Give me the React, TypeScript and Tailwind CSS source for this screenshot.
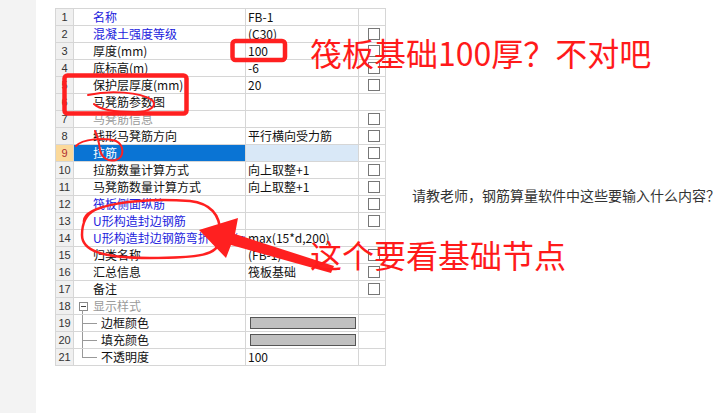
import React from "react";

type Row = {
  name: string;
  value?: string;
  tone?: "blue" | "gray";
  check?: boolean;
  selected?: boolean;
  group?: boolean;
  tree?: boolean;
  bar?: boolean;
};

const rows: Row[] = [
  { name: "名称", value: "FB-1", tone: "blue" },
  { name: "混凝土强度等级", value: "(C30)", tone: "blue", check: true },
  { name: "厚度(mm)", value: "100", check: true },
  { name: "底标高(m)", value: "-6", check: true },
  { name: "保护层厚度(mm)", value: "20", check: true },
  { name: "马凳筋参数图" },
  { name: "马凳筋信息", tone: "gray", check: true },
  { name: "线形马凳筋方向", value: "平行横向受力筋", check: true },
  { name: "拉筋", selected: true, check: true },
  { name: "拉筋数量计算方式", value: "向上取整+1", check: true },
  { name: "马凳筋数量计算方式", value: "向上取整+1", check: true },
  { name: "筏板侧面纵筋", tone: "blue", check: true },
  { name: "U形构造封边钢筋", tone: "blue", check: true },
  { name: "U形构造封边钢筋弯折长度(mm)", value: "max(15*d,200)", tone: "blue" },
  { name: "归类名称", value: "(FB-1)", check: true },
  { name: "汇总信息", value: "筏板基础", check: true },
  { name: "备注", check: true },
  { name: "显示样式", group: true, tone: "gray" },
  { name: "边框颜色", tree: true, bar: true },
  { name: "填充颜色", tree: true, bar: true },
  { name: "不透明度", tree: true, value: "100" },
];

const font = { fontFamily: '"Noto Sans CJK SC", "Noto Sans", sans-serif' };

function NameCell({ row, index }: { row: Row; index: number }) {
  const color = row.selected
    ? "text-white"
    : row.tone === "blue"
    ? "text-[#2222dd]"
    : row.tone === "gray"
    ? "text-[#9a9a9a]"
    : "text-[#111]";
  const last = index === rows.length - 1;

  if (row.group) {
    return (
      <div className={`relative flex h-full w-[172px] shrink-0 items-center overflow-hidden border-r border-[#d6d6d6] pl-[5px] ${color}`}>
        <span className="flex h-[9px] w-[9px] items-center justify-center border border-[#8a8a8a] bg-white">
          <span className="h-px w-[5px] bg-[#444]" />
        </span>
        <span className="ml-[5px] whitespace-nowrap">{row.name}</span>
        <span className="absolute left-[8px] top-[12px] h-[6px] w-px bg-[#999]" />
      </div>
    );
  }

  if (row.tree) {
    return (
      <div className={`relative flex h-full w-[172px] shrink-0 items-center overflow-hidden border-r border-[#d6d6d6] pl-[27px] ${color}`}>
        <span className={`absolute left-[8px] top-0 w-px bg-[#999] ${last ? "h-[8px]" : "h-full"}`} />
        <span className="absolute left-[8px] top-[8px] h-px w-[15px] bg-[#999]" />
        <span className="whitespace-nowrap">{row.name}</span>
      </div>
    );
  }

  return (
    <div
      className={`flex h-full w-[172px] shrink-0 items-center overflow-hidden border-r border-[#d6d6d6] pl-[19px] ${color} ${
        row.selected ? "bg-[#0a74d4]" : ""
      }`}
    >
      <span className="whitespace-nowrap">{row.name}</span>
    </div>
  );
}

function PropertyTable() {
  return (
    <div className="mt-[8px] w-[331px] border-t border-l border-[#d6d6d6] text-[12px] leading-none" style={font}>
      {rows.map((row, i) => (
        <div key={i} className="flex h-[17px] border-b border-[#d6d6d6]">
          <div
            className={`flex h-full w-[18px] shrink-0 items-center justify-center border-r border-[#d6d6d6] text-[11px] ${
              row.selected ? "bg-[#fbd99a] text-[#b03030]" : "bg-[#f0f0f0] text-[#333]"
            }`}
            style={{ fontFamily: '"Liberation Sans", Arial, sans-serif' }}
          >
            {i + 1}
          </div>
          <NameCell row={row} index={i} />
          <div
            className={`flex h-full w-[113px] shrink-0 items-center overflow-hidden border-r border-[#d6d6d6] pl-[2px] text-[#111] ${
              row.selected ? "bg-[#d9e8f7]" : ""
            }`}
          >
            {row.bar ? (
              <div className="ml-[2px] h-[12px] w-[106px] border border-[#555] bg-[#c0c0c0]" />
            ) : (
              <span className="whitespace-nowrap">{row.value}</span>
            )}
          </div>
          <div className="flex h-full w-[27px] shrink-0 items-center justify-center border-r border-[#d6d6d6] pl-[3px]">
            {row.check && <div className="h-[12px] w-[12px] border border-[#777] bg-white" />}
          </div>
        </div>
      ))}
    </div>
  );
}

function Annotations() {
  return (
    <svg className="pointer-events-none absolute left-0 top-0" width="720" height="413" viewBox="0 0 720 413">
      <g fill="none" stroke="#ff2020" strokeLinecap="round" strokeLinejoin="round">
        <rect x="232.5" y="41" width="52.5" height="19" rx="3" strokeWidth="4.5" />
        <rect x="64.5" y="75.5" width="122" height="38" rx="3" strokeWidth="4.5" />
        <path d="M88 95 C110 90 140 92 152 100 C158 106 150 112 135 112 C115 112 100 110 94 104" strokeWidth="2" />
        <path d="M76 146 C82 139 105 137 116 141 C124 145 125 157 116 160 C108 162 102 158 100 150 C99 142 97 135 95 131" strokeWidth="2" />
        <path d="M84 222 C82 205 140 197 190 201 C215 204 222 220 220 240 C218 255 200 258 150 258 C100 258 82 250 82 235 C82 225 85 215 95 210" strokeWidth="2.5" />
      </g>
      <path d="M199 230 L238 218 L235 234 L334 266 L331 273 L231 245 L226 258 Z" fill="#ff2020" />
    </svg>
  );
}

export default function App() {
  return (
    <div className="relative h-[413px] w-[720px] overflow-hidden bg-white">
      <div className="flex h-full">
        <div className="h-full w-[36px] shrink-0 bg-[#f3f3f3]" />
        <div className="ml-[19px] shrink-0">
          <PropertyTable />
        </div>
        <div className="shrink-0 pl-[26px] pt-[188px]">
          <p className="whitespace-nowrap text-[14px] leading-none text-[#333]" style={font}>
            请教老师，钢筋算量软件中这些要输入什么内容？
          </p>
        </div>
      </div>
      <Annotations />
      <div className="pointer-events-none absolute left-[310px] top-[36px] whitespace-nowrap text-[32px] leading-none text-[#ff1a1a]" style={font}>
        筏板基础100厚？不对吧
      </div>
      <div className="pointer-events-none absolute left-[310px] top-[238px] whitespace-nowrap text-[32px] leading-none text-[#ff1a1a]" style={font}>
        这个要看基础节点
      </div>
    </div>
  );
}
